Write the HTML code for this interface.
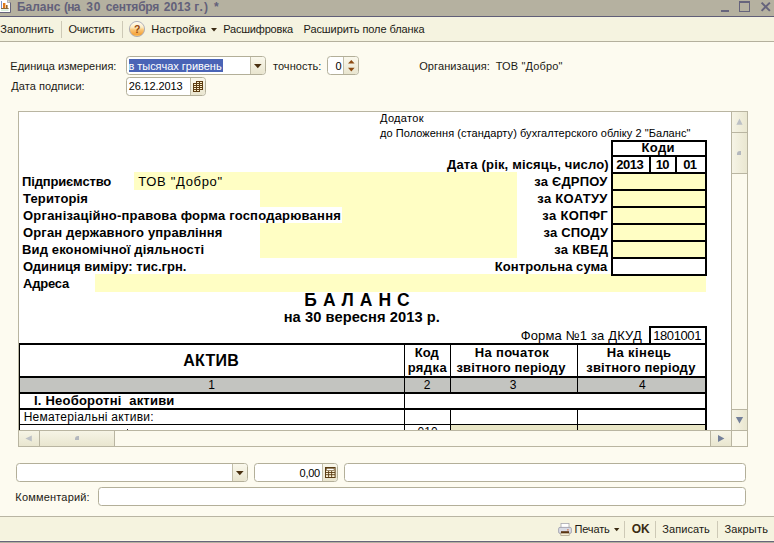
<!DOCTYPE html>
<html lang="ru">
<head>
<meta charset="utf-8">
<title>Баланс (на 30 сентября 2013 г.) *</title>
<style>
html,body{margin:0;padding:0}
body{width:774px;height:543px;overflow:hidden;position:relative;background:#fdfbf0;font-family:"Liberation Sans",sans-serif;color:#1c1a14}
.a{position:absolute;box-sizing:border-box}
.t{position:absolute;white-space:pre;font-family:"Liberation Sans",sans-serif}
#title{left:0;top:0;width:774px;height:16px;background:#b5b1a0}
#tline{left:0;top:16px;width:774px;height:1px;background:#605e78}
#tool{left:0;top:17px;width:774px;height:24px;background:#f5f3e0}
#toolb{left:0;top:41px;width:774px;height:1px;background:#b4b09d}
.sep{width:1px;background:#cdc9b6}
.fld{background:#fff;border:1px solid #b3af99;border-radius:3.5px}
.btn{background:linear-gradient(#faf8ec,#e9e5cf);border-left:1px solid #c2beaa}
.k{background:#000}
.y{background:#fffec4}
#doc{left:18px;top:111px;width:730px;height:336px;border:1px solid #b9b5a1;background:#fff;overflow:hidden}
.sb{background:linear-gradient(90deg,#f6f4e6,#e9e6cf)}
.sbh{background:linear-gradient(#f6f4e6,#e9e6cf)}
#bbar{left:0;top:517px;width:774px;height:23px;background:#f5f3df}
</style>
</head>
<body>
<!-- title bar -->
<div class="a" id="title"></div>
<div class="a" id="tline"></div>
<svg class="a" style="left:0;top:0" width="12" height="14" viewBox="0 0 12 14">
  <path d="M0 0H7.5L10 2.5V12H0Z" fill="#fff"/>
  <path d="M7.5 0V2.5H10" fill="#d9d7c8" stroke="#8a88a0" stroke-width=".6"/>
  <path d="M10.5 2.5V12.5H0" fill="none" stroke="#66647c" stroke-width="1"/>
  <rect x="1" y="1" width="1" height="8" fill="#7d93c9"/>
  <rect x="3" y="3" width="2.4" height="5" fill="#e0791a"/>
  <rect x="6" y="5" width="1.6" height="3" fill="#9a6a2a"/>
  <rect x="1" y="8" width="7.6" height="1" fill="#8a6a40"/>
  <rect x="1" y="9.6" width="7.6" height="1" fill="#bfe3c4"/>
</svg>
<!-- window buttons -->
<div class="a" style="left:721px;top:10px;width:8px;height:2px;background:#66647c"></div>
<div class="a" style="left:739px;top:1px;width:11px;height:11px;border:1px solid #66647c;border-top-width:2px"></div>
<svg class="a" style="left:760px;top:1px" width="12" height="12" viewBox="0 0 12 12"><path d="M1.6 1.6L9.9 9.9M9.9 1.6L1.6 9.9" stroke="#66647c" stroke-width="2" fill="none"/></svg>

<!-- toolbar -->
<div class="a" id="tool"></div>
<div class="a" id="toolb"></div>
<div class="a sep" style="left:61px;top:21px;height:17px"></div>
<div class="a sep" style="left:122px;top:21px;height:17px"></div>
<svg class="a" style="left:128px;top:20px" width="18" height="18" viewBox="0 0 18 18">
  <defs><linearGradient id="hg" x1="0" y1="0" x2="0" y2="1"><stop offset="0" stop-color="#fffdf6"/><stop offset=".38" stop-color="#fdecc4"/><stop offset=".55" stop-color="#fbc676"/><stop offset=".85" stop-color="#f5a43c"/><stop offset="1" stop-color="#fbd47a"/></linearGradient></defs>
  <circle cx="9" cy="9" r="7.6" fill="url(#hg)" stroke="#a9a9b4" stroke-width=".9"/>
  <text x="9.1" y="13.1" text-anchor="middle" font-family="Liberation Sans" font-weight="700" font-size="10.5" fill="#96480f">?</text>
</svg>
<svg class="a" style="left:211px;top:28px" width="6" height="4" viewBox="0 0 6 4"><path d="M0 0H6L3 3.4Z" fill="#3a2a12"/></svg>

<!-- form header fields -->
<div class="a fld" style="left:126px;top:56px;width:140px;height:19px"></div>
<div class="a" style="left:129px;top:59px;width:94px;height:13px;background:#4a64b6"></div>
<div class="a btn" style="left:250px;top:57px;width:15px;height:17px;border-radius:0 3px 3px 0"></div>
<svg class="a" style="left:254px;top:64px" width="8" height="5" viewBox="0 0 8 5"><path d="M0 0H7.6L3.8 4.2Z" fill="#4a3010"/></svg>

<div class="a fld" style="left:327px;top:56px;width:32px;height:19px"></div>
<div class="a btn" style="left:343px;top:57px;width:15px;height:17px;border-radius:0 3px 3px 0"></div>
<svg class="a" style="left:348px;top:60px" width="7" height="12" viewBox="0 0 7 12"><path d="M3.3 0L6.6 3.6H0Z" fill="#8c4a12"/><path d="M0 7.8H6.6L3.3 11.4Z" fill="#8c4a12"/></svg>

<div class="a fld" style="left:126px;top:77px;width:80px;height:19px"></div>
<div class="a btn" style="left:190px;top:78px;width:15px;height:17px;border-radius:0 3px 3px 0"></div>
<svg class="a" style="left:193px;top:81px" width="10" height="11" viewBox="0 0 10 11" shape-rendering="crispEdges"><path d="M3 0H10V9H7V11H0V2H3Z" fill="#fbf0cc"/><path d="M3 .5H10M0 2.5H10M0 4.5H10M0 6.5H10M0 8.5H10M0 10.5H7M.5 2V11M3.5 0V11M6.5 0V11M9.5 0V9" stroke="#5c3c12" stroke-width="1" fill="none"/></svg>

<!-- spreadsheet document -->
<div class="a" id="doc">
<div class="a" style="left:-19px;top:-112px;width:774px;height:543px">
  <!-- yellow cells -->
  <div class="a y" style="left:134px;top:172px;width:383px;height:18px"></div>
  <div class="a y" style="left:260px;top:190px;width:257px;height:68px"></div>
  <div class="a" style="left:260px;top:207px;width:82px;height:16px;background:#fff"></div>
  <div class="a y" style="left:95px;top:274px;width:611px;height:18px"></div>
  <div class="a y" style="left:613px;top:174px;width:92px;height:83px"></div>
  <!-- codes table -->
  <div class="a k" style="left:611px;top:140px;width:96px;height:2px"></div>
  <div class="a k" style="left:611px;top:155px;width:96px;height:2px"></div>
  <div class="a k" style="left:611px;top:172px;width:96px;height:2px"></div>
  <div class="a k" style="left:611px;top:189px;width:96px;height:2px"></div>
  <div class="a k" style="left:611px;top:206px;width:96px;height:2px"></div>
  <div class="a k" style="left:611px;top:223px;width:96px;height:2px"></div>
  <div class="a k" style="left:611px;top:240px;width:96px;height:2px"></div>
  <div class="a k" style="left:611px;top:257px;width:96px;height:2px"></div>
  <div class="a k" style="left:611px;top:274px;width:96px;height:2px"></div>
  <div class="a k" style="left:611px;top:140px;width:2px;height:136px"></div>
  <div class="a k" style="left:705px;top:140px;width:2px;height:136px"></div>
  <div class="a k" style="left:649px;top:155px;width:2px;height:19px"></div>
  <div class="a k" style="left:675px;top:155px;width:2px;height:19px"></div>
  <!-- DKUD box -->
  <div class="a k" style="left:649px;top:326px;width:58px;height:2px"></div>
  <div class="a k" style="left:649px;top:326px;width:2px;height:18px"></div>
  <div class="a k" style="left:705px;top:326px;width:2px;height:18px"></div>
  <!-- main table -->
  <div class="a" style="left:20px;top:378px;width:686px;height:14px;background:#c3c4c0"></div>
  <div class="a" style="left:451px;top:425px;width:254px;height:6px;background:#e9e6c6"></div>
  <div class="a k" style="left:19px;top:343px;width:688px;height:2px"></div>
  <div class="a k" style="left:19px;top:376px;width:688px;height:2px"></div>
  <div class="a k" style="left:19px;top:392px;width:688px;height:2px"></div>
  <div class="a k" style="left:19px;top:408px;width:688px;height:2px"></div>
  <div class="a k" style="left:19px;top:424px;width:688px;height:1px"></div>
  <div class="a k" style="left:19px;top:343px;width:1px;height:90px"></div>
  <div class="a k" style="left:404px;top:343px;width:1px;height:90px"></div>
  <div class="a k" style="left:450px;top:343px;width:1px;height:51px"></div>
  <div class="a k" style="left:450px;top:408px;width:1px;height:25px"></div>
  <div class="a k" style="left:577px;top:343px;width:1px;height:51px"></div>
  <div class="a k" style="left:577px;top:408px;width:1px;height:25px"></div>
  <div class="a k" style="left:705px;top:343px;width:2px;height:90px"></div>
  <span class="t" style="left:417.6px;top:425.3px;font-size:12px;line-height:14px;color:#000">010</span>
  <div class="a" style="left:127px;top:429px;width:1px;height:1px;background:#223"></div>
</div>
<!-- scrollbars (coords relative to #doc interior: origin 19,112) -->
<div class="a" style="left:712px;top:0;width:17px;height:318px;background:#fcfaee;border-left:1px solid #b9b5a1"></div>
<div class="a sb" style="left:713px;top:0;width:16px;height:20px"></div>
<div class="a" style="left:713px;top:20px;width:16px;height:1px;background:#b9b5a1"></div>
<div class="a sb" style="left:713px;top:21px;width:16px;height:40px"></div>
<div class="a" style="left:713px;top:61px;width:16px;height:1px;background:#b9b5a1"></div>
<svg class="a" style="left:717px;top:6px" width="7" height="8" viewBox="0 0 7 8"><path d="M3.5 .6L6.6 6.8H.4Z" fill="#bcc0c5"/></svg>
<div class="a" style="left:718px;top:39px;width:4px;height:4px;background:#b4b8be;border-radius:3px 0 0 0"></div>
<div class="a sb" style="left:713px;top:298px;width:16px;height:20px"></div>
<div class="a" style="left:713px;top:297px;width:16px;height:1px;background:#b9b5a1"></div>
<svg class="a" style="left:716px;top:304px" width="9" height="8" viewBox="0 0 9 8"><path d="M.9 1H8.1L4.5 7.4Z" fill="#74809a"/></svg>

<div class="a" style="left:0;top:318px;width:729px;height:17px;background:#fcfaee;border-top:1px solid #b9b5a1"></div>
<div class="a sbh" style="left:0;top:319px;width:20px;height:15px"></div>
<div class="a" style="left:20px;top:319px;width:1px;height:15px;background:#b9b5a1"></div>
<div class="a sbh" style="left:21px;top:319px;width:74px;height:15px"></div>
<div class="a" style="left:95px;top:319px;width:1px;height:15px;background:#b9b5a1"></div>
<svg class="a" style="left:6px;top:323px" width="8" height="7" viewBox="0 0 8 7"><path d="M.4 3.5L6.8 .4V6.6Z" fill="#bcc0c5"/></svg>
<div class="a" style="left:56px;top:324px;width:4px;height:4px;background:#b4b8be;border-radius:3px 0 0 0"></div>
<div class="a" style="left:691px;top:319px;width:1px;height:15px;background:#b9b5a1"></div>
<div class="a sbh" style="left:692px;top:319px;width:20px;height:15px"></div>
<div class="a" style="left:712px;top:319px;width:1px;height:15px;background:#b9b5a1"></div>
<svg class="a" style="left:698px;top:322px" width="8" height="9" viewBox="0 0 8 9"><path d="M7.4 4.5L1 .9V8.1Z" fill="#74809a"/></svg>
</div>

<!-- bottom fields -->
<div class="a fld" style="left:16px;top:463px;width:232px;height:19px"></div>
<div class="a btn" style="left:232px;top:464px;width:15px;height:17px;border-radius:0 3px 3px 0"></div>
<svg class="a" style="left:236px;top:471px" width="8" height="5" viewBox="0 0 8 5"><path d="M0 0H7.6L3.8 4.2Z" fill="#4a3010"/></svg>
<div class="a fld" style="left:254px;top:463px;width:84px;height:19px"></div>
<div class="a btn" style="left:322px;top:464px;width:15px;height:17px;border-radius:0 3px 3px 0"></div>
<svg class="a" style="left:325px;top:467px" width="11" height="11" viewBox="0 0 11 11"><rect x=".5" y=".5" width="9.6" height="10" fill="#fbf3d8" stroke="#5a3c14"/><rect x="1.5" y="1.5" width="7.6" height="2" fill="#fff" stroke="#5a3c14" stroke-width=".6"/><path d="M1 5.5H10M1 7.7H10M3.6 4V10.5M6.6 4V10.5" stroke="#5a3c14" stroke-width=".9"/></svg>
<div class="a fld" style="left:344px;top:463px;width:402px;height:19px"></div>
<div class="a fld" style="left:98px;top:487px;width:648px;height:19px"></div>

<!-- bottom command bar -->
<div class="a" style="left:0;top:516px;width:774px;height:1px;background:#b9b5a3"></div>
<div class="a" id="bbar"></div>
<div class="a" style="left:0;top:540px;width:774px;height:1px;background:#fbf9e8"></div>
<div class="a" style="left:0;top:541px;width:774px;height:1px;background:#67657a"></div>
<div class="a" style="left:0;top:542px;width:774px;height:1px;background:#b5b1a0"></div>
<svg class="a" style="left:558px;top:523px" width="14" height="13" viewBox="0 0 14 13">
  <rect x="3" y=".5" width="8" height="4.5" fill="#fff" stroke="#a8a8b0" stroke-width=".8"/>
  <rect x=".6" y="4.4" width="12.8" height="6" rx="1.4" fill="#d9dbe4" stroke="#9a9cab" stroke-width=".8"/>
  <rect x="2.8" y="10" width="8.4" height="2.5" fill="#f6efd6" stroke="#a69c86" stroke-width=".7"/>
  <rect x="3" y="8.2" width="8" height="2" fill="#5a3412"/>
  <rect x="9.2" y="6.4" width="1.4" height="1" fill="#d0521c"/>
</svg>
<svg class="a" style="left:614px;top:528px" width="6" height="4" viewBox="0 0 6 4"><path d="M0 0H5.4L2.7 3.2Z" fill="#3a2a12"/></svg>
<div class="a sep" style="left:624px;top:521px;height:17px"></div>
<div class="a sep" style="left:655px;top:521px;height:17px"></div>
<div class="a sep" style="left:717px;top:521px;height:17px"></div>

<span class="t" style="left:17.00px;top:-2px;font-size:12px;line-height:18px;font-weight:700;color:#62607a;letter-spacing:-0.040px;">Баланс</span>
<span class="t" style="left:63.90px;top:-2px;font-size:12px;line-height:18px;font-weight:700;color:#62607a;letter-spacing:-0.700px;">(на</span>
<span class="t" style="left:86.20px;top:-2px;font-size:12px;line-height:18px;font-weight:700;color:#62607a;letter-spacing:0.800px;">30</span>
<span class="t" style="left:105.70px;top:-2px;font-size:12px;line-height:18px;font-weight:700;color:#62607a;letter-spacing:-0.200px;">сентября</span>
<span class="t" style="left:163.70px;top:-2px;font-size:12px;line-height:18px;font-weight:700;color:#62607a;letter-spacing:0.100px;">2013</span>
<span class="t" style="left:194.30px;top:-2px;font-size:12px;line-height:18px;font-weight:700;color:#62607a;letter-spacing:1.300px;">г.)</span>
<span class="t" style="left:213.90px;top:-2px;font-size:12px;line-height:18px;font-weight:700;color:#62607a;">*</span>
<span class="t" style="left:0.30px;top:21px;font-size:11px;line-height:16px;letter-spacing:-0.037px;">Заполнить</span>
<span class="t" style="left:68.50px;top:21px;font-size:11px;line-height:16px;letter-spacing:-0.214px;">Очистить</span>
<span class="t" style="left:151.30px;top:21px;font-size:11px;line-height:16px;letter-spacing:0.050px;">Настройка</span>
<span class="t" style="left:223.20px;top:21px;font-size:11px;line-height:16px;letter-spacing:-0.190px;">Расшифровка</span>
<span class="t" style="left:303.50px;top:21px;font-size:11px;line-height:16px;letter-spacing:-0.075px;">Расширить поле бланка</span>
<span class="t" style="left:10.30px;top:58px;font-size:11px;line-height:16px;letter-spacing:0.012px;">Единица измерения:</span>
<span class="t" style="left:11.30px;top:78px;font-size:11px;line-height:16px;letter-spacing:0.075px;">Дата подписи:</span>
<span class="t" style="left:128.40px;top:58px;font-size:11px;line-height:16px;color:#fff;letter-spacing:-0.025px;">в тысячах гривень</span>
<span class="t" style="left:128.70px;top:78px;font-size:11px;line-height:16px;color:#000;letter-spacing:-0.133px;">26.12.2013</span>
<span class="t" style="left:273.00px;top:58px;font-size:11px;line-height:16px;letter-spacing:0.038px;">точность:</span>
<span class="t" style="left:335.50px;top:58px;font-size:11px;line-height:16px;color:#000;">0</span>
<span class="t" style="left:419.20px;top:58px;font-size:11px;line-height:16px;letter-spacing:0.109px;">Организация:</span>
<span class="t" style="left:495.70px;top:58px;font-size:11px;line-height:16px;letter-spacing:0.150px;">ТОВ "Добро"</span>
<span class="t" style="left:299.60px;top:465px;font-size:11px;line-height:16px;color:#000;letter-spacing:-0.267px;">0,00</span>
<span class="t" style="left:15.30px;top:489px;font-size:11px;line-height:16px;letter-spacing:0.182px;">Комментарий:</span>
<span class="t" style="left:574.50px;top:521px;font-size:11px;line-height:16px;letter-spacing:-0.160px;">Печать</span>
<span class="t" style="left:631.70px;top:520px;font-size:12px;line-height:18px;font-weight:700;color:#3a2c14;">OK</span>
<span class="t" style="left:662.30px;top:521px;font-size:11px;line-height:16px;letter-spacing:0.071px;">Записать</span>
<span class="t" style="left:724.50px;top:521px;font-size:11px;line-height:16px;letter-spacing:0.167px;">Закрыть</span>
<span class="t" style="left:380.00px;top:110px;font-size:11px;line-height:16px;color:#000;letter-spacing:0.333px;">Додаток</span>
<span class="t" style="left:380.00px;top:125px;font-size:11px;line-height:16px;color:#000;letter-spacing:0.054px;">до Положення (стандарту) бухгалтерского обліку 2 "Баланс"</span>
<span class="t" style="left:641.60px;top:138px;font-size:13px;line-height:20px;font-weight:700;color:#000;letter-spacing:0.333px;">Коди</span>
<span class="t" style="left:447.00px;top:155px;font-size:13px;line-height:20px;font-weight:700;color:#000;letter-spacing:0.167px;">Дата (рік, місяць, число)</span>
<span class="t" style="left:616.30px;top:155px;font-size:13px;line-height:20px;font-weight:700;color:#000;letter-spacing:-0.533px;">2013</span>
<span class="t" style="left:655.70px;top:155px;font-size:13px;line-height:20px;font-weight:700;color:#000;letter-spacing:-0.700px;">10</span>
<span class="t" style="left:683.30px;top:155px;font-size:13px;line-height:20px;font-weight:700;color:#000;letter-spacing:-0.700px;">01</span>
<span class="t" style="left:22.00px;top:172px;font-size:13px;line-height:20px;font-weight:700;color:#000;letter-spacing:-0.155px;">Підприємство</span>
<span class="t" style="left:23.00px;top:189px;font-size:13px;line-height:20px;font-weight:700;color:#000;letter-spacing:0.150px;">Територія</span>
<span class="t" style="left:23.00px;top:206px;font-size:13px;line-height:20px;font-weight:700;color:#000;letter-spacing:0.220px;">Організаційно-правова форма господарювання</span>
<span class="t" style="left:23.00px;top:223px;font-size:13px;line-height:20px;font-weight:700;color:#000;letter-spacing:0.138px;">Орган державного управління</span>
<span class="t" style="left:22.00px;top:240px;font-size:13px;line-height:20px;font-weight:700;color:#000;letter-spacing:0.132px;">Вид економічної діяльності</span>
<span class="t" style="left:23.00px;top:257px;font-size:13px;line-height:20px;font-weight:700;color:#000;letter-spacing:0.017px;">Одиниця виміру: тис.грн.</span>
<span class="t" style="left:23.00px;top:274px;font-size:13px;line-height:20px;font-weight:700;color:#000;letter-spacing:-0.200px;">Адреса</span>
<span class="t" style="left:138.30px;top:172px;font-size:13px;line-height:20px;color:#000;letter-spacing:0.670px;">ТОВ "Добро"</span>
<span class="t" style="left:534.30px;top:172px;font-size:13px;line-height:20px;font-weight:700;color:#000;letter-spacing:0.175px;">за ЄДРПОУ</span>
<span class="t" style="left:537.30px;top:189px;font-size:13px;line-height:20px;font-weight:700;color:#000;letter-spacing:0.300px;">за КОАТУУ</span>
<span class="t" style="left:542.30px;top:206px;font-size:13px;line-height:20px;font-weight:700;color:#000;letter-spacing:0.343px;">за КОПФГ</span>
<span class="t" style="left:543.50px;top:223px;font-size:13px;line-height:20px;font-weight:700;color:#000;letter-spacing:0.171px;">за СПОДУ</span>
<span class="t" style="left:554.30px;top:240px;font-size:13px;line-height:20px;font-weight:700;color:#000;letter-spacing:0.233px;">за КВЕД</span>
<span class="t" style="left:494.80px;top:257px;font-size:13px;line-height:20px;font-weight:700;color:#000;letter-spacing:0.064px;">Контрольна сума</span>
<span class="t" style="left:304.30px;top:287px;font-size:17.5px;line-height:26px;font-weight:700;color:#000;letter-spacing:0.570px;">Б А Л А Н С</span>
<span class="t" style="left:283.70px;top:306px;font-size:14.67px;line-height:22px;font-weight:700;color:#000;letter-spacing:0.080px;">на 30 вересня 2013 р.</span>
<span class="t" style="left:520.70px;top:326px;font-size:13px;line-height:20px;color:#000;letter-spacing:0.153px;">Форма №1 за ДКУД</span>
<span class="t" style="left:653.20px;top:326px;font-size:13px;line-height:20px;color:#000;letter-spacing:-0.400px;">1801001</span>
<span class="t" style="left:183.20px;top:349px;font-size:16px;line-height:24px;font-weight:700;color:#000;letter-spacing:0.275px;">АКТИВ</span>
<span class="t" style="left:414.80px;top:343px;font-size:13px;line-height:20px;font-weight:700;color:#000;letter-spacing:-0.050px;">Код</span>
<span class="t" style="left:407.70px;top:358px;font-size:13px;line-height:20px;font-weight:700;color:#000;letter-spacing:0.400px;">рядка</span>
<span class="t" style="left:474.80px;top:343px;font-size:13px;line-height:20px;font-weight:700;color:#000;letter-spacing:0.322px;">На початок</span>
<span class="t" style="left:456.50px;top:358px;font-size:13px;line-height:20px;font-weight:700;color:#000;letter-spacing:0.120px;">звітного періоду</span>
<span class="t" style="left:606.80px;top:343px;font-size:13px;line-height:20px;font-weight:700;color:#000;letter-spacing:0.363px;">На кінець</span>
<span class="t" style="left:586.30px;top:358px;font-size:13px;line-height:20px;font-weight:700;color:#000;letter-spacing:0.133px;">звітного періоду</span>
<span class="t" style="left:208.30px;top:376px;font-size:12px;line-height:18px;color:#000;">1</span>
<span class="t" style="left:423.70px;top:376px;font-size:12px;line-height:18px;color:#000;">2</span>
<span class="t" style="left:509.80px;top:376px;font-size:12px;line-height:18px;color:#000;">3</span>
<span class="t" style="left:639.00px;top:376px;font-size:12px;line-height:18px;color:#000;">4</span>
<span class="t" style="left:34.00px;top:391px;font-size:13px;line-height:20px;font-weight:700;color:#000;letter-spacing:0.215px;">I. Необоротні  активи</span>
<span class="t" style="left:23.70px;top:408px;font-size:12px;line-height:18px;color:#000;letter-spacing:0.265px;">Нематеріальні активи:</span>
</body>
</html>
